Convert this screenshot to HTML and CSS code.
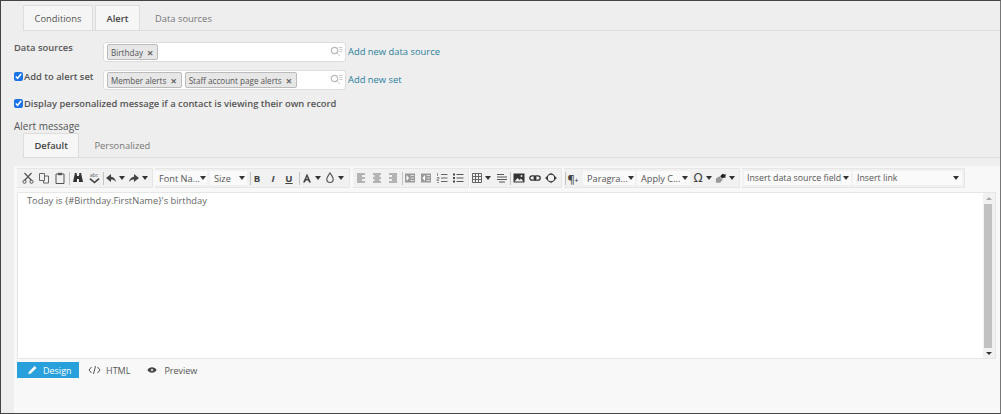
FILE: index.html
```html
<!DOCTYPE html>
<html lang="en">
<head>
<meta charset="utf-8">
<title>Alert</title>
<link rel="stylesheet" href="styles.css">
</head>
<body>
<svg class="defs" width="0" height="0" aria-hidden="true">
  <symbol id="search" viewBox="0 0 13 11"><circle cx="4.5" cy="4.5" r="3.2" fill="none" stroke="#bbb" stroke-width="1.2"/><path d="M7 7l3 3.2M8.500 1.500h4M9.500 3.500h3M9.500 5.500h3" stroke="#ccc" fill="none"/></symbol>
  <symbol id="cut" viewBox="0 0 12 12"><path d="M2.500 1l7 7.500M9.500 1l-7 7.500" stroke="#555" stroke-width="1.200" fill="none"/><circle cx="2.500" cy="9.700" r="1.600" fill="none" stroke="#555"/><circle cx="9.500" cy="9.700" r="1.600" fill="none" stroke="#555"/></symbol>
  <symbol id="copy" viewBox="0 0 12 12"><path d="M1.500 1.500h5v7h-5zM6.500 4h4v7h-5V8.500" fill="none" stroke="#666"/></symbol>
  <symbol id="paste" viewBox="0 0 12 12"><path d="M2 2h8v9.500H2z" fill="none" stroke="#555"/><path d="M4 .8h4v2.400H4z" fill="#555"/></symbol>
  <symbol id="find" viewBox="0 0 12 12"><path d="M1 10l1.500-7h2.500v7zM11 10L9.500 3H7v7zM5 4h2v3H5zM2.700 1h2v2h-2zM7.300 1h2v2h-2z" fill="#333"/></symbol>
  <symbol id="spell" viewBox="0 0 14 7"><path d="M1 1.500l6 5 6-5L11.600.1 7 4 2.400.1z" fill="#444"/></symbol>
  <symbol id="undo" viewBox="0 0 12 12"><path d="M6 2L1 6l5 4V7.500c2 0 3.500.6 5 2.500-.4-3-2.200-5-5-5.300z" fill="#444"/></symbol>
  <symbol id="redo" viewBox="0 0 12 12"><path d="M6 2l5 4-5 4V7.500c-2 0-3.500.6-5 2.500.4-3 2.200-5 5-5.300z" fill="#444"/></symbol>
  <symbol id="fcolor" viewBox="0 0 12 12"><path d="M6 1.500L2 10.500h2l.8-2h2.400l.8 2h2zM5.300 7L6 4.800 6.700 7z" fill="#444" fill-rule="evenodd"/></symbol>
  <symbol id="drop" viewBox="0 0 12 12"><path d="M6 1C4.500 3.500 2.800 5 2.800 7.300a3.200 3.200 0 0 0 6.400 0C9.200 5 7.500 3.500 6 1z" fill="none" stroke="#555" stroke-width="1.200"/></symbol>
  <symbol id="al" viewBox="0 0 12 12"><path d="M2 2h8M2 4h5M2 6h8M2 8h5M2 10h8" stroke="#777" fill="none"/></symbol>
  <symbol id="ac" viewBox="0 0 12 12"><path d="M2 2h8M3.500 4h5M2 6h8M3.500 8h5M2 10h8" stroke="#777" fill="none"/></symbol>
  <symbol id="ar" viewBox="0 0 12 12"><path d="M2 2h8M5 4h5M2 6h8M5 8h5M2 10h8" stroke="#777" fill="none"/></symbol>
  <symbol id="ind" viewBox="0 0 12 12"><path d="M1 1.500h10v9H1z" fill="#999"/><path d="M2.500 3v6L5 6z" fill="#fff"/><path d="M6.500 3.500h3.500M6.500 6h3.500M6.500 8.500h3.500" stroke="#ddd"/></symbol>
  <symbol id="out" viewBox="0 0 12 12"><path d="M1 1.500h10v9H1z" fill="#999"/><path d="M5 3v6L2.500 6z" fill="#fff"/><path d="M6.500 3.500h3.500M6.500 6h3.500M6.500 8.500h3.500" stroke="#ddd"/></symbol>
  <symbol id="ol" viewBox="0 0 12 12"><path d="M5 2.500h6.500M5 6h6.500M5 9.500h6.500" stroke="#666" fill="none"/><path d="M1.500 1v3M1 5.500h2v1.500H1v1.500h2M1 10.500h2" stroke="#777" stroke-width=".8" fill="none"/></symbol>
  <symbol id="ul" viewBox="0 0 12 12"><path d="M4.500 2.500h7M4.500 6h7M4.500 9.500h7" stroke="#555" fill="none"/><path d="M1 1.500h2v2H1zM1 5h2v2H1zM1 8.500h2v2H1z" fill="#444"/></symbol>
  <symbol id="table" viewBox="0 0 12 12"><path d="M1.500 1.500h9v9h-9zM1.500 4.500h9M1.500 7.500h9M4.500 1.500v9M7.500 1.500v9" stroke="#666" fill="none"/></symbol>
  <symbol id="para" viewBox="0 0 12 12"><path d="M1 2.500h7M1 5h10M1 7.500h10M3 10h6" stroke="#555" fill="none"/></symbol>
  <symbol id="image" viewBox="0 0 12 12"><path d="M.5 1.500h11v9H.5z" fill="#333"/><path d="M1.500 9.500l3-3.500 2 2 1.500-1.500 2.500 3z" fill="#eee"/><circle cx="8.500" cy="4" r="1" fill="#eee"/></symbol>
  <symbol id="link" viewBox="0 0 12 12"><rect x=".8" y="3.800" width="6" height="4.400" rx="2.200" fill="none" stroke="#333" stroke-width="1.300"/><rect x="5.200" y="3.800" width="6" height="4.400" rx="2.200" fill="none" stroke="#333" stroke-width="1.300"/></symbol>
  <symbol id="src" viewBox="0 0 12 12"><circle cx="6" cy="6" r="3.800" fill="none" stroke="#333" stroke-width="1.200"/><path d="M6 .8v1.800M6 9.400v1.800M.5 6l2-1.700v3.400zM11.500 6l-2-1.700v3.400z" stroke="#333" fill="#333" stroke-width=".6"/></symbol>
  <symbol id="brush" viewBox="0 0 14 12"><path d="M6 4l3-3 2 1 2 0-1 2 .5 2-2-.5-2 1z" fill="#222"/><path d="M1 7l4-3 4 4-3 3.500H1z" fill="#999"/></symbol>
  <symbol id="pencil" viewBox="0 0 12 12"><path d="M1 11l.7-3L8.500 1.200l2.300 2.300L4 10.300z" fill="#fff"/></symbol>
  <symbol id="code" viewBox="0 0 13 10"><path d="M3.500 2L1 5l2.500 3M9.500 2L12 5 9.500 8M7.500 1L5.500 9" stroke="#555" fill="none"/></symbol>
  <symbol id="eye" viewBox="0 0 13 10"><path d="M.5 5C2 2.500 4 1.500 6.500 1.500S11 2.500 12.500 5C11 7.500 9 8.500 6.500 8.500S2 7.500.5 5z" fill="#444"/><circle cx="6.500" cy="5" r="1.600" fill="#ccc"/></symbol>
</svg>

<main class="frame">
  <nav class="tabs top-tabs">
    <a class="tab">Conditions</a>
    <a class="tab current">Alert</a>
    <a class="tab plain">Data sources</a>
  </nav>

  <div class="form-row source-row">
    <span class="label">Data sources</span>
    <div class="tagbox source-box">
      <span class="tag">Birthday <i class="x">×</i></span>
      <svg class="search"><use href="#search"/></svg>
    </div>
    <a class="add">Add new data source</a>
  </div>

  <div class="form-row set-row">
    <label class="label check-label"><input type="checkbox" checked>Add to alert set</label>
    <div class="tagbox set-box">
      <span class="tag">Member alerts <i class="x">×</i></span>
      <span class="tag">Staff account page alerts <i class="x">×</i></span>
      <svg class="search"><use href="#search"/></svg>
    </div>
    <a class="add">Add new set</a>
  </div>

  <label class="personal"><input type="checkbox" checked>Display personalized message if a contact is viewing their own record</label>

  <div class="message-title">Alert message</div>
  <nav class="tabs sub-tabs">
    <a class="tab current">Default</a>
    <a class="tab plain">Personalized</a>
  </nav>

  <section class="editor">
    <div class="toolbar">
      <div class="group g1">
        <button class="tool"><svg><use href="#cut"/></svg></button>
        <button class="tool"><svg><use href="#copy"/></svg></button>
        <button class="tool"><svg><use href="#paste"/></svg></button>
        <span class="sep"></span>
        <button class="tool"><svg><use href="#find"/></svg></button>
        <button class="tool spell"><span class="abc">abc</span><svg><use href="#spell"/></svg></button>
        <span class="sep"></span>
        <button class="tool short"><svg><use href="#undo"/></svg></button><span class="arrow"></span>
        <button class="tool short"><svg><use href="#redo"/></svg></button><span class="arrow"></span>
      </div>
      <div class="group g2">
        <span class="select font">Font Na...<span class="arrow"></span></span>
        <span class="select size">Size<span class="arrow"></span></span>
        <span class="sep after-size"></span>
        <button class="tool bold">B</button>
        <button class="tool ital">I</button>
        <button class="tool under">U</button>
        <span class="sep after-u"></span>
        <button class="tool short"><svg><use href="#fcolor"/></svg></button><span class="arrow"></span>
        <button class="tool short"><svg><use href="#drop"/></svg></button><span class="arrow"></span>
      </div>
      <div class="group g3">
        <button class="tool"><svg><use href="#al"/></svg></button>
        <button class="tool"><svg><use href="#ac"/></svg></button>
        <button class="tool"><svg><use href="#ar"/></svg></button>
        <span class="sep tight"></span>
        <button class="tool"><svg><use href="#ind"/></svg></button>
        <button class="tool"><svg><use href="#out"/></svg></button>
        <button class="tool"><svg><use href="#ol"/></svg></button>
        <button class="tool"><svg><use href="#ul"/></svg></button>
      </div>
      <div class="group g4">
        <button class="tool short"><svg><use href="#table"/></svg></button><span class="arrow"></span>
        <button class="tool para-align"><svg><use href="#para"/></svg></button>
        <span class="sep flush"></span>
        <button class="tool"><svg><use href="#image"/></svg></button>
        <button class="tool"><svg><use href="#link"/></svg></button>
        <button class="tool"><svg><use href="#src"/></svg></button>
      </div>
      <div class="group g5">
        <span class="sep tight"></span>
        <button class="tool pilcrow">¶<small class="plus">+</small></button>
        <span class="select para">Paragra...<span class="arrow"></span></span>
        <span class="select apply">Apply C...<span class="arrow"></span></span>
        <button class="tool short omega-btn"><span class="omega">Ω</span></button><span class="arrow"></span>
        <button class="tool short"><svg><use href="#brush"/></svg></button><span class="arrow"></span>
      </div>
      <div class="group g6">
        <span class="select field">Insert data source field<span class="arrow"></span></span>
        <span class="select link-sel">Insert link<span class="arrow"></span></span>
      </div>
    </div>
    <div class="content">
      <p class="body-text">Today is {#Birthday.FirstName}'s birthday</p>
      <div class="scrollbar">
        <span class="sb-btn up"></span>
        <span class="sb-track"><span class="sb-thumb"></span></span>
        <span class="sb-btn down"></span>
      </div>
    </div>
    <div class="modes">
      <a class="mode active"><svg><use href="#pencil"/></svg>Design</a>
      <a class="mode"><svg><use href="#code"/></svg>HTML</a>
      <a class="mode"><svg class="eye"><use href="#eye"/></svg>Preview</a>
    </div>
  </section>
</main>
</body>
</html>
```

FILE: styles.css
```css
* { box-sizing: border-box; }
html, body { margin: 0; padding: 0; }
body { width: 1001px; height: 414px; overflow: hidden; font-family: "Open Sans", "Liberation Sans", sans-serif; font-size: 9.4px; color: #555; }
.defs { position: absolute; }
.frame { width: 1001px; height: 414px; background: #eeeeee; border: 1px solid #444; border-right-color: #777; padding: 5px 0 0 13px; display: flex; flex-direction: column; overflow: hidden; }

.tabs { display: flex; align-items: flex-end; border-bottom: 1px solid #ddd; }
.top-tabs { height: 25px; margin-left: 9px; gap: 2px; flex: none; }
.tab { height: 25px; display: flex; align-items: center; padding: 0 10.5px; background: #f5f5f5; border: 1px solid #ddd; border-bottom: 0; color: #555; }
.tab.current { font-weight: 600; color: #444; background: #f6f6f6; }
.tab.plain { background: none; border-color: transparent; color: #777; padding: 0 12px; }
.sub-tabs .tab.plain { padding: 0 14px; }

.form-row { display: flex; align-items: center; flex: none; }
.label { width: 89px; font-weight: 600; color: #555; font-size: 9.4px; }
.source-row { margin-top: 11px; height: 20px; }
.source-row .label { margin-top: -9px; }
.set-row { margin-top: 8px; height: 20px; }
.set-row .label { margin-top: -8px; }
.check-label, .personal { display: flex; align-items: center; }
input[type=checkbox] { width: 9px; height: 9px; margin: 0 1px 0 0; accent-color: #1b73e8; flex: none; }

.tagbox { position: relative; height: 20px; background: #fff; border: 1px solid #ddd; border-radius: 3px; display: flex; align-items: center; gap: 3px; padding-left: 3px; }
.source-box { width: 243px; }
.set-box { width: 243px; }
.tag { height: 16px; display: flex; align-items: center; gap: 4px; padding: 0 4px 0 3px; background: #e7e7e7; border: 1px solid #bbb; border-radius: 2px; font-size: 8.1px; color: #555; white-space: nowrap; }
.x { font-style: normal; font-weight: 700; font-size: 11px; color: #666; line-height: 1; }
.search { position: absolute; right: 2px; top: 3px; width: 13px; height: 11px; }
.add { margin-left: 2px; margin-top: -2px; color: #2a7f9c; font-size: 9.4px; }

.personal { margin-top: 8px; height: 11px; font-weight: 600; font-size: 9.4px; color: #555; flex: none; }
.message-title { margin-top: 11px; height: 13px; line-height: 13px; font-size: 10px; color: #555; flex: none; }
.sub-tabs { height: 24px; margin-left: 9px; margin-top: 1px; flex: none; }
.sub-tabs .tab { height: 24px; }

.editor { width: 987px; height: 248px; margin-top: 8px; background: #f8f8f8; padding: 2px 0 0 3px; flex: none; }
.toolbar { display: flex; height: 20px; width: 979px; align-items: stretch; }
.group { display: flex; align-items: center; background: #f1f1f1; border: 1px solid #e6e6e6; border-left: 0; }
.g1 { padding: 0 2px 0 3px; margin-right: 2px; }
.g2 { padding-right: 3px; margin-right: 3px; }
.g3 { padding-right: 2px; margin-right: 1px; }
.g4 { padding-right: 2px; margin-right: 2px; }
.g5 { padding-right: 2px; margin-right: 2px; }
.g6 { padding: 0 2px; gap: 2px; }
.tool { width: 16px; height: 18px; padding: 0; background: none; border: 0; display: flex; align-items: center; justify-content: center; font: inherit; color: #444; flex: none; }
.tool svg { width: 12px; height: 12px; }
.tool.short { width: 14px; }
.bold { font-weight: 700; font-size: 9.6px; margin-left: -2px; }
.ital { font-style: italic; font-weight: 700; font-size: 9.6px; }
.under { font-weight: 700; font-size: 9.6px; text-decoration: underline; }
.spell { flex-direction: column; line-height: 1; }
.spell svg { width: 13px; height: 6px; }
.abc { font-size: 5px; line-height: 5px; color: #555; }
.pilcrow { font-size: 11px; font-weight: 600; }
.plus { font-size: 7px; line-height: 1; margin-top: 5px; }
.omega { font-size: 12px; font-family: "DejaVu Sans", sans-serif; color: #444; }
.omega-btn { margin-left: 1px; }
.para-align { margin-left: 1px; }
.sep { width: 1px; height: 13px; background: #c4c4c4; margin-left: 1px; flex: none; }
.after-size { margin-left: 3px; }
.after-u { margin-left: 2px; }
.tight { margin-right: -1px; }
.flush { margin-left: 0; }
.arrow { width: 0; height: 0; border: 3px solid transparent; border-top: 4px solid #333; border-bottom: 0; margin: 0 2px 0 1px; flex: none; }
.select { height: 14px; display: flex; align-items: center; justify-content: space-between; background: #fafafa; padding-left: 4px; font-size: 9.2px; color: #555; white-space: nowrap; flex: none; }
.select .arrow { margin: 0 2px 0 0; }
.font { width: 52px; }
.size { width: 37px; margin-left: 3px; }
.para { width: 52px; margin-left: 2px; }
.apply { width: 53px; margin-left: 2px; }
.field { width: 107px; font-size: 8.8px; padding-left: 3px; }
.link-sel { width: 109px; font-size: 8.8px; }
.link-sel .arrow { margin-right: 3px; }

.content { position: relative; width: 979px; height: 167px; margin-top: 4px; background: #fff; border: 1px solid #e6e6e6; }
.body-text { margin: 0; padding: 1px 9px; font-size: 9.3px; color: #666; line-height: 13px; }
.scrollbar { position: absolute; right: 0; top: 0; bottom: 0; width: 12px; background: #f1f1f1; display: flex; flex-direction: column; align-items: center; }
.sb-btn { width: 0; height: 0; margin: 4px 0; border: 3px solid transparent; flex: none; }
.up { border-bottom: 3px solid #aaa; border-top: 0; }
.down { border-top: 3px solid #333; border-bottom: 0; }
.sb-track { flex: 1; width: 100%; padding: 0 3px 0 1px; display: flex; }
.sb-thumb { width: 100%; height: 144px; background: #c1c1c1; }

.modes { display: flex; height: 16px; margin-top: 3px; align-items: center; }
.mode { display: flex; align-items: center; height: 16px; gap: 5px; color: #555; font-size: 9px; }
.mode svg { width: 13px; height: 10px; }
.mode svg.eye { width: 10px; height: 8px; margin-right: 2px; }
.mode:nth-child(2) { margin-left: 9px; }
.mode:nth-child(3) { margin-left: 17px; }
.mode.active { width: 62px; background: #27a0dc; color: #fff; padding-left: 9px; gap: 4px; }
```
